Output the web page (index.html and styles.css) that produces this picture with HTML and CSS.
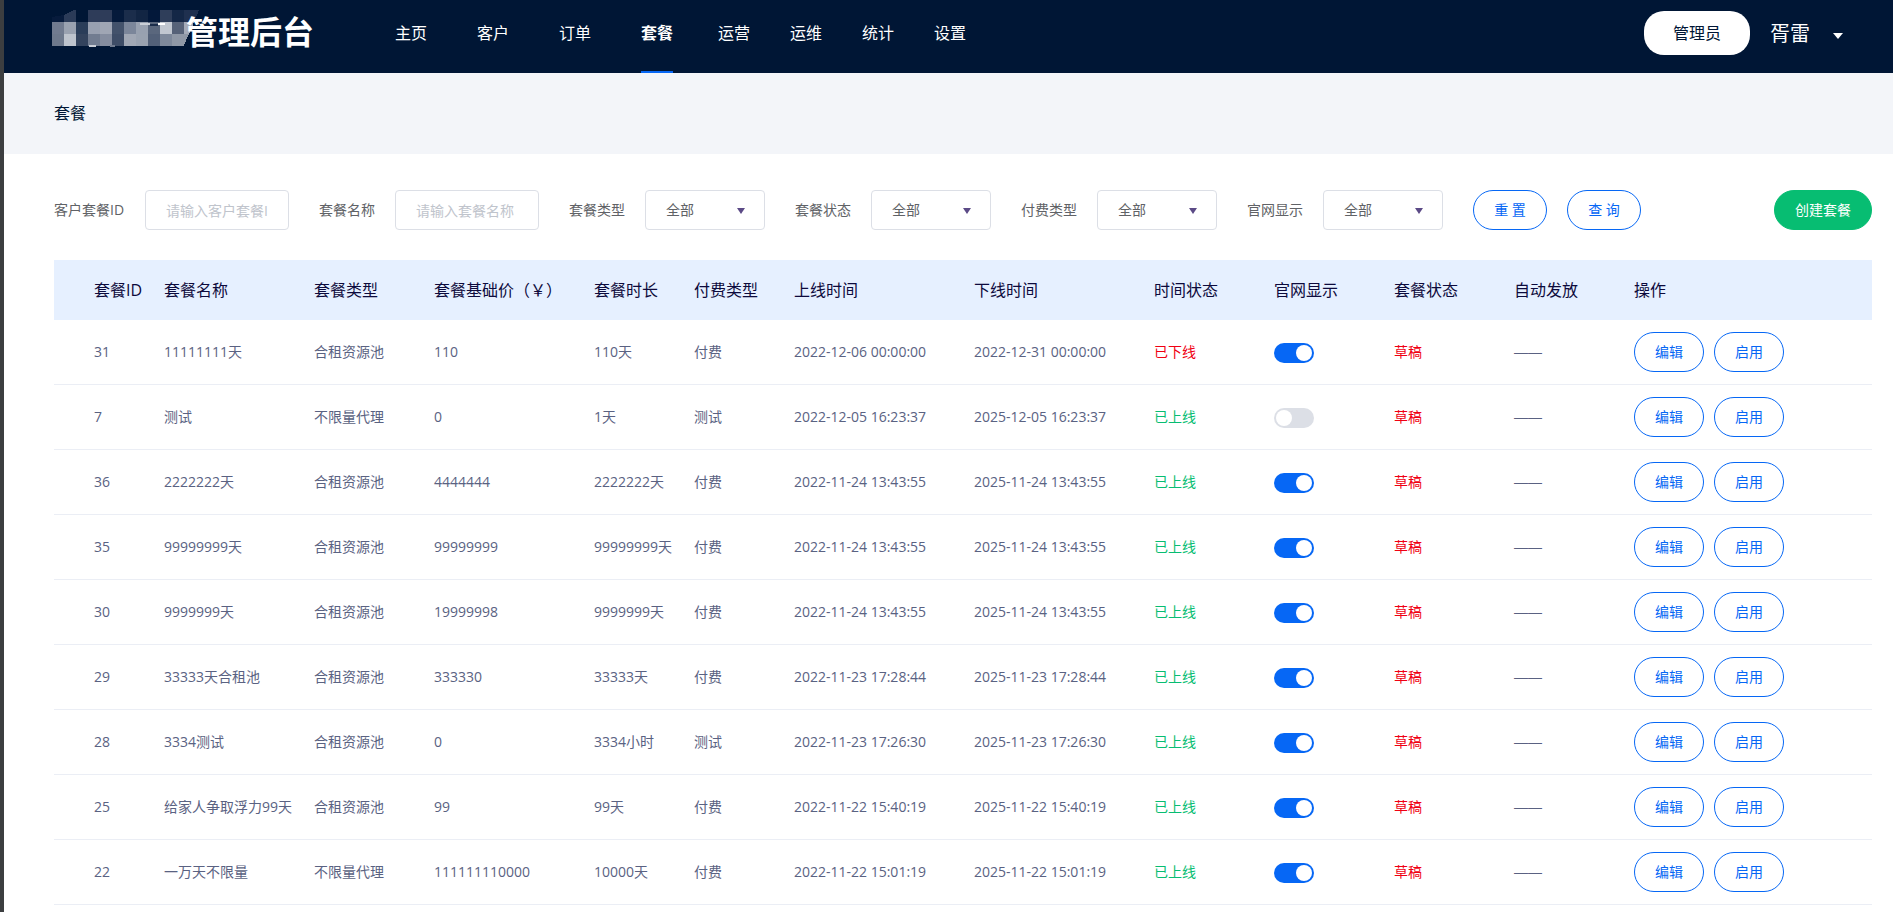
FILE: index.html
```html
<!DOCTYPE html>
<html lang="zh-CN">
<head>
<meta charset="utf-8">
<title>套餐 - 管理后台</title>
<link rel="stylesheet" href="styles.css">
</head>
<body>
<header class="topbar">
  <div class="brand">
    <svg class="brand-mark" width="148" height="40" viewBox="0 0 148 40" aria-hidden="true">
      <g shape-rendering="crispEdges">
        <path d="M0 7L12 5L22 0V12H0z" fill="#071b3c"/>
        <path d="M12 5L22 0H24V12H12z" fill="#2b3b58"/>
        <path d="M36 0h24v12H36z" fill="#2e3c59"/><path d="M60 0h12v12H60z" fill="#051a3b"/>
        <path d="M72 0h12v12H72z" fill="#1b2d4b"/><path d="M84 0h12v12H84z" fill="#122543"/>
        <path d="M96 0h12v12H96z" fill="#03183a"/><path d="M108 0h12v12h-12z" fill="#2f3e5a"/>
        <path d="M120 0h12v12h-12z" fill="#142746"/><path d="M132 0h15l-5 12h-10z" fill="#1f304f"/>
        <path d="M0 12h12v12H0z" fill="#717b8f"/><path d="M12 12h12v12H12z" fill="#9aa2b0"/>
        <path d="M24 12h12v12H24z" fill="#2a3d59"/><path d="M36 12h12v12H36z" fill="#98a0b0"/>
        <path d="M48 12h12v12H48z" fill="#a0a6b4"/><path d="M60 12h12v12H60z" fill="#43526b"/>
        <path d="M72 12h12v12H72z" fill="#7b869a"/><path d="M84 12h12v12H84z" fill="#98a1b0"/>
        <path d="M96 12h12v12H96z" fill="#5a677d"/><path d="M108 12h12v12h-12z" fill="#c1c7d0"/>
        <path d="M120 12h12v12h-12z" fill="#566278"/><path d="M132 12h10l-5 12h-5z" fill="#a4abb8"/>
        <path d="M0 24h12v12H0z" fill="#6e798c"/><path d="M12 24h12v12H12z" fill="#bec4cd"/>
        <path d="M24 24h12v12H24z" fill="#33435d"/><path d="M36 24h12v12H36z" fill="#717c90"/>
        <path d="M48 24h12v12H48z" fill="#858d9f"/><path d="M60 24h12v12H60z" fill="#3e4d67"/>
        <path d="M72 24h12v12H72z" fill="#a1a8b5"/><path d="M84 24h12v12H84z" fill="#99a2b0"/>
        <path d="M96 24h12v12H96z" fill="#526078"/><path d="M108 24h12v12h-12z" fill="#7e899b"/>
        <path d="M120 24h12v12h-12z" fill="#8f98a6"/><path d="M132 24h5l-5 11z" fill="#8f98a6"/>
        <path d="M88 13h10v2h-10z" fill="#c9ced6"/><path d="M98 14h8v2h-8z" fill="#1b2d4b"/><path d="M106 13h7v2h-7z" fill="#fff"/>
        <path d="M37 35h7v2h-7z" fill="#c9ced6"/><path d="M58 35h5v2h-5z" fill="#717c90"/>
      </g>
    </svg>
    <h1 class="brand-name">管理后台</h1>
  </div>
  <nav class="nav">
    <a class="nav-link wide" href="#">主页</a>
    <a class="nav-link wide" href="#">客户</a>
    <a class="nav-link wide" href="#">订单</a>
    <a class="nav-link wide active" href="#" aria-current="page">套餐</a>
    <a class="nav-link" href="#">运营</a>
    <a class="nav-link" href="#">运维</a>
    <a class="nav-link" href="#">统计</a>
    <a class="nav-link" href="#">设置</a>
  </nav>
  <div class="account">
    <button class="role" type="button">管理员</button>
    <button class="user" type="button">胥雷
      <svg class="user-caret" width="10" height="6" viewBox="0 0 10 6" aria-hidden="true"><path d="M0 0h10L5 6z" fill="#fff"/></svg>
    </button>
  </div>
</header>

<div class="crumb">套餐</div>

<main class="content">
  <form class="filters">
    <div class="field"><label for="pid">客户套餐ID</label><input id="pid" class="box" type="text" placeholder="请输入客户套餐ID"></div>
    <div class="field"><label for="pname">套餐名称</label><input id="pname" class="box" type="text" placeholder="请输入套餐名称"></div>
    <div class="field"><label for="ptype">套餐类型</label><span class="pick"><select id="ptype" class="box"><option>全部</option></select></span></div>
    <div class="field"><label for="pstate">套餐状态</label><span class="pick"><select id="pstate" class="box"><option>全部</option></select></span></div>
    <div class="field"><label for="pay">付费类型</label><span class="pick"><select id="pay" class="box"><option>全部</option></select></span></div>
    <div class="field"><label for="site">官网显示</label><span class="pick"><select id="site" class="box"><option>全部</option></select></span></div>
    <div class="filter-actions">
      <button class="btn" type="reset">重 置</button>
      <button class="btn" type="button">查 询</button>
    </div>
    <button class="btn create" type="button">创建套餐</button>
  </form>

  <table class="plans">
    <colgroup>
      <col class="c-id"><col class="c-name"><col class="c-std"><col class="c-price"><col class="c-short"><col class="c-short"><col class="c-time"><col class="c-time"><col class="c-std"><col class="c-std"><col class="c-std"><col class="c-std"><col>
    </colgroup>
    <thead>
      <tr><th>套餐ID</th><th>套餐名称</th><th>套餐类型</th><th>套餐基础价（￥）</th><th>套餐时长</th><th>付费类型</th><th>上线时间</th><th>下线时间</th><th>时间状态</th><th>官网显示</th><th>套餐状态</th><th>自动发放</th><th>操作</th></tr>
    </thead>
    <tbody id="rows"></tbody>
  </table>
</main>
<script src="app.js"></script>
</body>
</html>
```
FILE: styles.css
```css
* { box-sizing: border-box; }

body {
  margin: 0;
  min-height: 100vh;
  border-left: 4px solid #3c3e40;
  background: #fff;
  color: #5a6282;
  font: 14px/20px "Open Sans", "Noto Sans CJK SC", sans-serif;
  overflow: hidden;
}

button, input, select { font: inherit; }
button { cursor: pointer; }

.topbar {
  display: flex;
  height: 73px;
  padding: 0 50px 0 48px;
  background: #001635;
  color: #fff;
}

.brand {
  display: flex;
  align-items: flex-start;
  width: 318px;
  padding-top: 10px;
}
.brand-mark { flex: none; }
.brand-name {
  margin: 0 0 0 -14px;
  font-size: 32px;
  line-height: 44px;
  font-weight: 700;
  white-space: nowrap;
}

.nav { display: flex; font-size: 16px; }
.nav-link {
  margin: 0 20px;
  padding-top: 21px;
  line-height: 24px;
  color: #fff;
  text-decoration: none;
  white-space: nowrap;
}
.nav-link.wide { margin: 0 25px; }
.nav-link.active {
  border-bottom: 2px solid #0667f5;
  font-weight: 700;
}

.account {
  display: flex;
  align-items: flex-start;
  gap: 20px;
  margin-left: auto;
  padding-top: 11px;
}
.role {
  width: 106px;
  height: 44px;
  padding: 0;
  border: 0;
  border-radius: 20px;
  background: #fff;
  color: #001635;
  font-size: 16px;
}
.user {
  display: flex;
  align-items: center;
  gap: 23px;
  height: 46px;
  padding: 0;
  border: 0;
  background: none;
  color: #fff;
  font-size: 20px;
}
.user-caret { margin-top: 3px; }

.crumb {
  padding: 28px 50px 29px;
  background: #f3f5f9;
  color: #001635;
  font-size: 16px;
  line-height: 24px;
}

.content { padding: 36px 21px 0 50px; }

.filters {
  display: flex;
  align-items: center;
  gap: 30px;
  margin-bottom: 30px;
}
.field {
  display: flex;
  align-items: center;
  gap: 20px;
  color: #606266;
  white-space: nowrap;
}
.field:first-child label { min-width: 71px; }
.box {
  width: 144px;
  height: 40px;
  padding: 0 20px;
  border: 1px solid #dcdfe6;
  border-radius: 4px;
  background: #fff;
  color: #606266;
}
.box::placeholder { color: #c0c4cc; opacity: 1; }
.pick { position: relative; }
.pick .box {
  display: block;
  width: 120px;
  appearance: none;
}
.pick::after {
  content: "";
  position: absolute;
  right: 20px;
  top: 18px;
  border: 4px solid transparent;
  border-top: 6px solid #5b4a86;
  border-bottom: 0;
  pointer-events: none;
}

.filter-actions { display: flex; gap: 20px; }
.btn {
  height: 40px;
  padding: 0 20px;
  border: 1px solid #0667f5;
  border-radius: 20px;
  background: #fff;
  color: #0667f5;
  white-space: nowrap;
}
.filter-actions .btn { width: 74px; }
.btn.create {
  margin-left: auto;
  border-color: #07bd72;
  background: #07bd72;
  color: #fff;
}

.plans {
  width: 100%;
  table-layout: fixed;
  border-collapse: separate;
  border-spacing: 0;
}
.c-id { width: 110px; }
.c-name { width: 150px; }
.c-std { width: 120px; }
.c-price { width: 160px; }
.c-short { width: 100px; }
.c-time { width: 180px; }
.plans th, .plans td {
  padding: 0;
  text-align: left;
  white-space: nowrap;
}
.plans th:first-child, .plans td:first-child { padding-left: 40px; }
.plans th {
  height: 60px;
  background: #e6f0ff;
  color: #0d0a3c;
  font-size: 16px;
  font-weight: 400;
}
.plans td {
  height: 65px;
  border-bottom: 1px solid #ebeef5;
}
.plans .bad { color: #f00012; }
.plans .good { color: #07bd72; }
.plans .none { font-family: "Liberation Sans", sans-serif; }

.switch {
  display: block;
  width: 40px;
  height: 20px;
  margin: 2px 0 0;
  padding: 2px;
  appearance: none;
  border-radius: 10px;
  background: #dcdfe6;
}
.switch::before {
  content: "";
  display: block;
  width: 16px;
  height: 16px;
  border-radius: 50%;
  background: #fff;
}
.switch:checked { background: #0667f5; }
.switch:checked::before { margin-left: 20px; }

.row-actions { display: flex; gap: 10px; }
```
FILE: app.js
```js
const plans = [
  ["31", "11111111天", "合租资源池", "110", "110天", "付费", "2022-12-06 00:00:00", "2022-12-31 00:00:00", false, true],
  ["7", "测试", "不限量代理", "0", "1天", "测试", "2022-12-05 16:23:37", "2025-12-05 16:23:37", true, false],
  ["36", "2222222天", "合租资源池", "4444444", "2222222天", "付费", "2022-11-24 13:43:55", "2025-11-24 13:43:55", true, true],
  ["35", "99999999天", "合租资源池", "99999999", "99999999天", "付费", "2022-11-24 13:43:55", "2025-11-24 13:43:55", true, true],
  ["30", "9999999天", "合租资源池", "19999998", "9999999天", "付费", "2022-11-24 13:43:55", "2025-11-24 13:43:55", true, true],
  ["29", "33333天合租池", "合租资源池", "333330", "33333天", "付费", "2022-11-23 17:28:44", "2025-11-23 17:28:44", true, true],
  ["28", "3334测试", "合租资源池", "0", "3334小时", "测试", "2022-11-23 17:26:30", "2025-11-23 17:26:30", true, true],
  ["25", "给家人争取浮力99天", "合租资源池", "99", "99天", "付费", "2022-11-22 15:40:19", "2025-11-22 15:40:19", true, true],
  ["22", "一万天不限量", "不限量代理", "111111110000", "10000天", "付费", "2022-11-22 15:01:19", "2025-11-22 15:01:19", true, true]
];

document.getElementById("rows").innerHTML = plans.map(p => `
  <tr>
    ${p.slice(0, 8).map(v => `<td>${v}</td>`).join("")}
    <td class="${p[8] ? "good" : "bad"}">${p[8] ? "已上线" : "已下线"}</td>
    <td><input class="switch" type="checkbox" role="switch" aria-label="官网显示 ${p[0]}" ${p[9] ? "checked" : ""}></td>
    <td class="bad">草稿</td>
    <td class="none">——</td>
    <td><div class="row-actions"><button class="btn" type="button">编辑</button><button class="btn" type="button">启用</button></div></td>
  </tr>`).join("");
```
